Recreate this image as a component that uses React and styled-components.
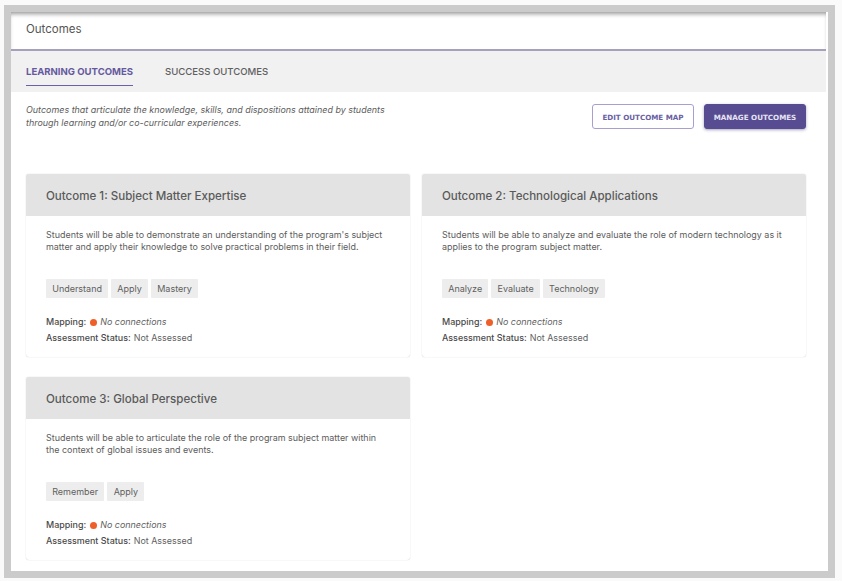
import React from "react";
import styled, { createGlobalStyle } from "styled-components";

const outcomes = [
  {
    title: "Outcome 1: Subject Matter Expertise",
    text: "Students will be able to demonstrate an understanding of the program's subject matter and apply their knowledge to solve practical problems in their field.",
    tags: ["Understand", "Apply", "Mastery"],
  },
  {
    title: "Outcome 2: Technological Applications",
    text: "Students will be able to analyze and evaluate the role of modern technology as it applies to the program subject matter.",
    tags: ["Analyze", "Evaluate", "Technology"],
  },
  {
    title: "Outcome 3: Global Perspective",
    text: "Students will be able to articulate the role of the program subject matter within the context of global issues and events.",
    tags: ["Remember", "Apply"],
  },
];

const App = () => {
  return (
    <>
      <GlobalStyle />
      <Frame>
        <Header>Outcomes</Header>
        <Tabs>
          <Tab $active>LEARNING OUTCOMES</Tab>
          <Tab>SUCCESS OUTCOMES</Tab>
        </Tabs>
        <Content>
          <Intro>
            <Description>
              Outcomes that articulate the knowledge, skills, and dispositions
              attained by students through learning and/or co-curricular
              experiences.
            </Description>
            <Actions>
              <OutlineButton>EDIT OUTCOME MAP</OutlineButton>
              <FilledButton>MANAGE OUTCOMES</FilledButton>
            </Actions>
          </Intro>
          <CardGrid>
            {outcomes.map((outcome) => (
              <Card key={outcome.title}>
                <CardTitle>{outcome.title}</CardTitle>
                <CardBody>
                  <CardText>{outcome.text}</CardText>
                  <TagRow>
                    {outcome.tags.map((tag) => (
                      <Tag key={tag}>{tag}</Tag>
                    ))}
                  </TagRow>
                  <Meta>
                    <MetaLine>
                      <MetaLabel>Mapping:</MetaLabel>
                      <Dot />
                      <em>No connections</em>
                    </MetaLine>
                    <MetaLine>
                      <MetaLabel>Assessment Status:</MetaLabel>
                      Not Assessed
                    </MetaLine>
                  </Meta>
                </CardBody>
              </Card>
            ))}
          </CardGrid>
        </Content>
      </Frame>
    </>
  );
};

const GlobalStyle = createGlobalStyle`
  html, body {
    margin: 0;
    background: #fafafa;
  }

  body {
    font-family: Inter, "Liberation Sans", sans-serif;
    color: #555;
  }
`;

const Frame = styled.div`
  box-sizing: border-box;
  width: 831px;
  height: 573px;
  margin: 5px 0 0 4px;
  border: 7px solid #cbcbcb;
  background: #fff;
  overflow: hidden;
`;

const Header = styled.div`
  box-sizing: border-box;
  height: 39px;
  margin-right: 2px;
  padding: 10px 15px 0;
  font-size: 11.5px;
  line-height: 14px;
  color: #555;
  border-bottom: 2px solid #a5a0bb;
  box-shadow: inset 0 4px 4px -2px #999;
`;

const Tabs = styled.div`
  box-sizing: border-box;
  display: flex;
  gap: 32px;
  height: 41px;
  margin-right: 2px;
  padding: 0 15px;
  background: #f1f1f1;
`;

const Tab = styled.div`
  box-sizing: border-box;
  height: 35px;
  padding-top: 15px;
  font-size: 9.55px;
  line-height: 12px;
  font-weight: ${(props) => (props.$active ? 700 : 500)};
  color: ${(props) => (props.$active ? "#65599f" : "#606060")};
  border-bottom: ${(props) => (props.$active ? "1.5px solid #6c60a8" : "none")};
`;

const Content = styled.div`
  padding: 12px 22px 0 15px;
`;

const Intro = styled.div`
  display: flex;
  justify-content: space-between;
  align-items: flex-start;
  height: 70px;
`;

const Description = styled.p`
  width: 370px;
  margin: 0;
  font-size: 8.95px;
  line-height: 12.5px;
  font-style: italic;
  color: #5c5c5c;
`;

const Actions = styled.div`
  display: flex;
  gap: 10px;
`;

const BaseButton = styled.button`
  box-sizing: border-box;
  width: 102px;
  height: 25px;
  padding: 1px 0 0;
  border-radius: 3px;
  font-family: "DejaVu Sans", sans-serif;
  font-size: 7.15px;
  font-weight: 700;
`;

const OutlineButton = styled(BaseButton)`
  background: #fff;
  border: 1px solid #a79fd0;
  color: #6a5fa3;
`;

const FilledButton = styled(BaseButton)`
  background: #574c92;
  border: 1px solid #574c92;
  color: #e6e3f3;
  box-shadow: 0 1px 3px rgba(60, 50, 110, 0.45);
`;

const CardGrid = styled.div`
  display: grid;
  grid-template-columns: 384px 384px;
  gap: 20px 12px;
  align-items: start;
`;

const Card = styled.div`
  border-radius: 3px;
  background: #fff;
  box-shadow: 0 0 1px rgba(0, 0, 0, 0.3);
  overflow: hidden;
`;

const CardTitle = styled.div`
  box-sizing: border-box;
  height: 42px;
  padding: 15px 20px 0;
  background: #e3e3e3;
  font-size: 11.55px;
  line-height: 14px;
  font-weight: 500;
  color: #5a5a5a;
`;

const CardBody = styled.div`
  padding: 13px 20px 13px;
`;

const CardText = styled.p`
  height: 40px;
  margin: 0;
  font-size: 8.95px;
  line-height: 12px;
  color: #5c5c5c;
`;

const TagRow = styled.div`
  display: flex;
  gap: 3px;
  margin-top: 10px;
`;

const Tag = styled.span`
  padding: 0 6.2px;
  height: 19px;
  border-radius: 1px;
  background: #ededed;
  font-size: 9px;
  line-height: 19px;
  color: #5f5f5f;
`;

const Meta = styled.div`
  display: flex;
  flex-direction: column;
  gap: 4px;
  margin-top: 18px;
  font-size: 8.95px;
  line-height: 12px;
  color: #5f5f5f;
`;

const MetaLine = styled.div`
  display: flex;
  align-items: center;
`;

const MetaLabel = styled.span`
  margin-right: 3px;
  font-weight: 500;
  color: #4a4a4a;
`;

const Dot = styled.span`
  width: 7px;
  height: 7px;
  margin: 0 3px 0 1px;
  border-radius: 50%;
  background: #ee5f2a;
`;

export default App;
